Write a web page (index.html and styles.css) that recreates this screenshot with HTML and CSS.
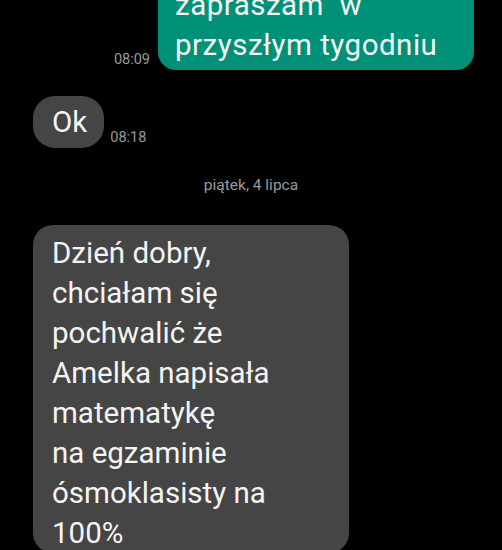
FILE: index.html
```html
<!DOCTYPE html>
<html>
<head>
    <title>Wiadomości</title>
    <link rel="stylesheet" href="styles.css">
</head>
<body>

    <div class="chat">
        <div class="row row-out first-row">
            <span class="time">08:09</span>
            <div class="bubble bubble-out">
                zapraszam&nbsp; w<br>
                przyszłym tygodniu
            </div>
        </div>

        <div class="row row-in ok-row">
            <div class="bubble bubble-in bubble-short">Ok</div>
            <span class="time">08:18</span>
        </div>

        <div class="date">piątek, 4 lipca</div>

        <div class="row row-in long-row">
            <div class="bubble bubble-in bubble-long">
                Dzień dobry,<br>
                chciałam się<br>
                pochwalić że<br>
                Amelka napisała<br>
                matematykę<br>
                na egzaminie<br>
                ósmoklasisty na<br>
                100%
            </div>
            <span class="time time-late">10:20</span>
        </div>
    </div>

</body>
</html>
```

FILE: styles.css
```css
html, body {
    margin: 0;
    height: 100%;
    background: #000;
    overflow: hidden;
}

body {
    font-family: Roboto, "Noto Sans", sans-serif;
    color: #f4f4f4;
}

.chat {
    display: flex;
    flex-direction: column;
}

.row {
    display: flex;
    align-items: flex-end;
    gap: 8px;
}

.row-out {
    justify-content: flex-end;
    padding-right: 28px;
}

.row-in {
    justify-content: flex-start;
    padding-left: 33px;
    gap: 6px;
}

.first-row {
    margin-top: -23px;
}

.ok-row {
    margin-top: 26px;
}

.long-row {
    margin-top: 30px;
}

.bubble {
    font-size: 29.5px;
    line-height: 40px;
    box-sizing: border-box;
}

.bubble-out {
    width: 316px;
    background: #019178;
    border-radius: 18px;
    padding: 8px 17px 5px;
    letter-spacing: 0.5px;
}

.bubble-in {
    background: #454545;
}

.bubble-short {
    border-radius: 22px;
    padding: 6px 17px 6px 19px;
}

.bubble-long {
    width: 316px;
    border-radius: 20px;
    padding: 8px 19px 0;
}

.time {
    font-size: 14.5px;
    color: #9a9a9a;
    line-height: 16px;
    padding-bottom: 2px;
}

.time-late {
    padding-bottom: 0;
    margin-bottom: -12px;
}

.date {
    margin-top: 27px;
    text-align: center;
    font-size: 15.5px;
    line-height: 20px;
    color: #9a9a9a;
}
```
